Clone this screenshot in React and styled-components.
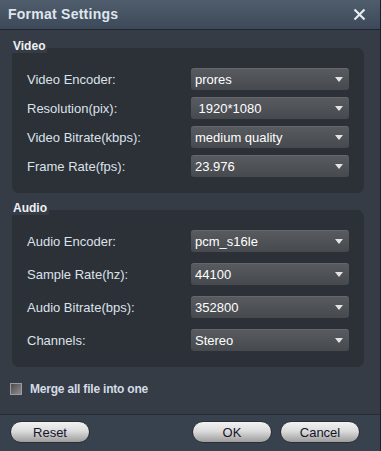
import React, { useState } from 'react';
import styled, { createGlobalStyle } from 'styled-components';

const GlobalStyle = createGlobalStyle`
  html, body {
    margin: 0;
    padding: 0;
    background: #363c45;
  }
  * {
    box-sizing: border-box;
  }
`;

const Window = styled.div`
  width: 381px;
  height: 451px;
  display: flex;
  flex-direction: column;
  background: #363c45;
  border-right: 1px solid #16202b;
  font-family: "Liberation Sans", Arial, sans-serif;
  overflow: hidden;
`;

const TitleBar = styled.div`
  height: 30px;
  flex: none;
  display: flex;
  align-items: center;
  justify-content: space-between;
  padding: 0 14px 1px 8px;
  background: linear-gradient(#4f5d6d, #3d4958);
  border-bottom: 1px solid #1f252c;
`;

const Title = styled.h1`
  margin: 0;
  font-size: 14px;
  font-weight: bold;
  letter-spacing: 0.25px;
  color: #dfe5ec;
`;

const CloseButton = styled.button`
  width: 13px;
  height: 13px;
  padding: 0;
  border: none;
  background: none;
  display: flex;
  cursor: pointer;
`;

const Content = styled.div`
  flex: 1;
  display: flex;
  flex-direction: column;
  padding: 9px 16px 0 12px;
`;

const GroupLabel = styled.div`
  align-self: flex-start;
  margin-top: ${(p) => p.$offset || 0}px;
  margin-bottom: -5px;
  padding: 0 2px 0 1px;
  height: 14px;
  line-height: 14px;
  font-size: 12px;
  font-weight: bold;
  color: #eef1f5;
  background: #363c45;
  position: relative;
  z-index: 1;
`;

const Panel = styled.div`
  display: grid;
  grid-template-columns: 1fr 158px;
  row-gap: ${(p) => p.$gap}px;
  align-items: center;
  padding: 20px 15px 16px 15px;
  background: #2c3037;
  border-radius: 7px;
`;

const FieldLabel = styled.label`
  font-size: 13px;
  color: #dbe2ea;
`;

const SelectBox = styled.div`
  height: 22px;
  display: flex;
  align-items: center;
  justify-content: space-between;
  padding: 0 6px 0 4px;
  border-radius: 3px;
  background: linear-gradient(#585b60, #46494e);
  box-shadow: inset 0 1px 0 rgba(255, 255, 255, 0.08);
  font-size: 13px;
  color: #ffffff;
  white-space: pre;
  cursor: pointer;
`;

const Arrow = styled.span`
  width: 0;
  height: 0;
  border-left: 4px solid transparent;
  border-right: 4px solid transparent;
  border-top: 5px solid #e4e4e4;
  margin-top: 1px;
`;

const CheckRow = styled.label`
  display: flex;
  align-items: center;
  gap: 8px;
  margin: 16px 0 0 -2px;
  height: 12px;
  font-size: 12px;
  font-weight: bold;
  letter-spacing: -0.2px;
  color: #d3dbe6;
  cursor: pointer;
`;

const CheckBox = styled.span`
  width: 12px;
  height: 12px;
  flex: none;
  border: 1px solid #9c9c9c;
  background: ${(p) =>
    p.$checked
      ? 'linear-gradient(135deg, #9aa6b4, #dfe6ee)'
      : 'linear-gradient(135deg, #4b4b4d, #8e8e90)'};
`;

const Footer = styled.div`
  height: 37px;
  flex: none;
  display: flex;
  align-items: flex-start;
  gap: 8px;
  padding: 6px 20px 0 10px;
  background: #38424e;
  border-top: 1px solid #262c33;
`;

const PillButton = styled.button`
  width: 80px;
  height: 22px;
  padding: 0;
  border: 1px solid #2b2e33;
  border-radius: 11px;
  background: linear-gradient(#f2f2f2 0%, #dcdcdc 45%, #b9b9b9 75%, #9d9d9d 100%);
  font-family: "Liberation Sans", Arial, sans-serif;
  font-size: 13px;
  color: #14142a;
  cursor: pointer;
  margin-left: ${(p) => (p.$push ? 'auto' : '0')};
`;

const videoFields = [
  ['Video Encoder:', 'prores'],
  ['Resolution(pix):', ' 1920*1080'],
  ['Video Bitrate(kbps):', 'medium quality'],
  ['Frame Rate(fps):', '23.976'],
];

const audioFields = [
  ['Audio Encoder:', 'pcm_s16le'],
  ['Sample Rate(hz):', '44100'],
  ['Audio Bitrate(bps):', '352800'],
  ['Channels:', 'Stereo'],
];

const Field = ({ label, value }) => (
  <>
    <FieldLabel>{label}</FieldLabel>
    <SelectBox>
      <span>{value}</span>
      <Arrow />
    </SelectBox>
  </>
);

const App = () => {
  const [merge, setMerge] = useState(false);

  return (
    <Window>
      <GlobalStyle />
      <TitleBar>
        <Title>Format Settings</Title>
        <CloseButton aria-label="Close">
          <svg width="13" height="13" viewBox="0 0 13 13">
            <path d="M1.5 1.5 L11.5 11.5 M11.5 1.5 L1.5 11.5" stroke="#e6eaef" strokeWidth="2.2" />
          </svg>
        </CloseButton>
      </TitleBar>

      <Content>
        <GroupLabel>Video</GroupLabel>
        <Panel $gap={7}>
          {videoFields.map(([label, value]) => (
            <Field key={label} label={label} value={value} />
          ))}
        </Panel>

        <GroupLabel $offset={8}>Audio</GroupLabel>
        <Panel $gap={11}>
          {audioFields.map(([label, value]) => (
            <Field key={label} label={label} value={value} />
          ))}
        </Panel>

        <CheckRow onClick={() => setMerge(!merge)}>
          <CheckBox $checked={merge} />
          Merge all file into one
        </CheckRow>
      </Content>

      <Footer>
        <PillButton>Reset</PillButton>
        <PillButton $push>OK</PillButton>
        <PillButton>Cancel</PillButton>
      </Footer>
    </Window>
  );
};

export default App;
